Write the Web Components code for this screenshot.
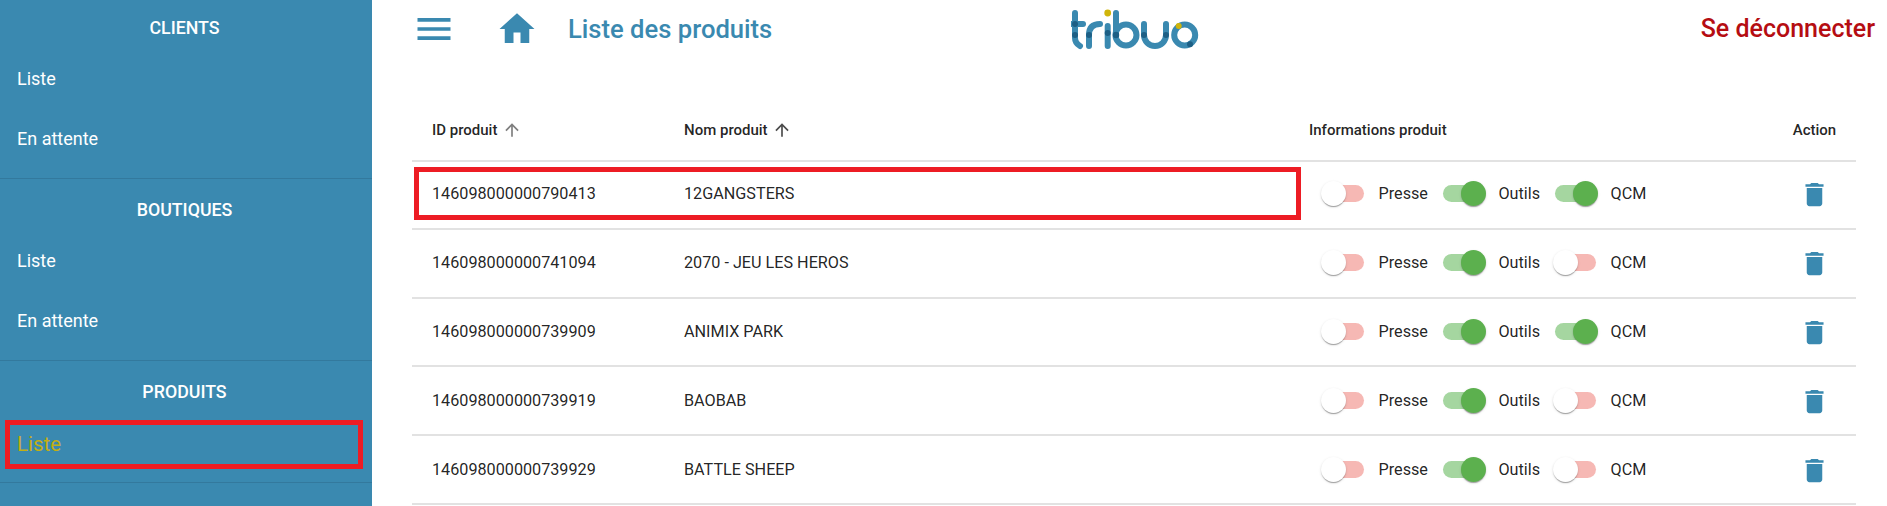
<!DOCTYPE html>
<html lang="fr">
<head>
<meta charset="utf-8">
<title>Liste des produits</title>
<style>
  html, body { margin: 0; height: 100%; overflow: hidden; background: #fff; }
  body { font-family: Roboto, "Liberation Sans", sans-serif; }
</style>
</head>
<body>
<app-shell>
  <app-sidebar slot="sidebar">
    <nav-section title="CLIENTS" first>
      <nav-item>Liste</nav-item>
      <nav-item>En attente</nav-item>
    </nav-section>
    <nav-section title="BOUTIQUES">
      <nav-item>Liste</nav-item>
      <nav-item>En attente</nav-item>
    </nav-section>
    <nav-section title="PRODUITS">
      <nav-item active>Liste</nav-item>
    </nav-section>
  </app-sidebar>
  <app-topbar title="Liste des produits"></app-topbar>
  <product-table>
    <product-row pid="146098000000790413" name="12GANGSTERS" presse="0" outils="1" qcm="1" marked></product-row>
    <product-row pid="146098000000741094" name="2070 - JEU LES HEROS" presse="0" outils="1" qcm="0"></product-row>
    <product-row pid="146098000000739909" name="ANIMIX PARK" presse="0" outils="1" qcm="1"></product-row>
    <product-row pid="146098000000739919" name="BAOBAB" presse="0" outils="1" qcm="0"></product-row>
    <product-row pid="146098000000739929" name="BATTLE SHEEP" presse="0" outils="1" qcm="0"></product-row>
  </product-table>
</app-shell>

<script>
const COLUMNS = '272px 625px 1fr 83px';

class AppShell extends HTMLElement {
  constructor() {
    super();
    this.attachShadow({ mode: 'open' });
    this.shadowRoot.innerHTML = `
      <style>
        :host { display: grid; grid-template-columns: 372px 1fr; height: 506px; overflow: hidden; }
        .main { min-width: 0; }
      </style>
      <slot name="sidebar"></slot>
      <div class="main"><slot></slot></div>
    `;
  }
}

class AppSidebar extends HTMLElement {
  constructor() {
    super();
    this.attachShadow({ mode: 'open' });
    this.shadowRoot.innerHTML = `
      <style>
        :host { display: block; background: #3a89b0; height: 506px; overflow: hidden; position: relative; }
      </style>
      <slot></slot>
    `;
  }
}

class NavSection extends HTMLElement {
  constructor() {
    super();
    this.attachShadow({ mode: 'open' });
    this.shadowRoot.innerHTML = `
      <style>
        :host { display: block; padding-bottom: 10px; border-bottom: 1px solid #33799d; }
        :host([first]) { margin-top: -3px; }
        h2 {
          margin: 0; height: 51px; padding: 19px 3px 0 0; box-sizing: border-box;
          font: 500 17.8px/24px Roboto, sans-serif; color: #fff; text-align: center;
        }
      </style>
      <h2></h2>
      <slot></slot>
    `;
    this.shadowRoot.querySelector('h2').textContent = this.getAttribute('title');
    this.removeAttribute('title');
  }
}

class NavItem extends HTMLElement {
  constructor() {
    super();
    this.attachShadow({ mode: 'open' });
    this.shadowRoot.innerHTML = `
      <style>
        :host {
          display: flex; align-items: center; height: 60px; padding-left: 17px;
          font: 400 18px Roboto, sans-serif; color: #fff; position: relative;
        }
        :host([active]) { height: 58px; margin-top: 2px; padding-top: 2px; box-sizing: border-box; font-size: 20.5px; color: #c3af12; }
        :host([active])::after {
          content: ''; position: absolute; left: 5px; top: 6px; width: 358px; height: 49px;
          box-sizing: border-box; border: 5px solid #ed1c24;
        }
      </style>
      <slot></slot>
    `;
  }
}

class AppTopbar extends HTMLElement {
  constructor() {
    super();
    this.attachShadow({ mode: 'open' });
    this.shadowRoot.innerHTML = `
      <style>
        :host { display: flex; align-items: center; height: 60px; color: #3a89b0; font-family: Roboto, sans-serif; }
        svg { display: block; fill: currentColor; flex: none; }
        .menu { margin: -3px 0 0 39.5px; }
        .home { margin: -3px 0 0 40px; }
        h1 { margin: -2px 0 0 30.5px; font-size: 25.6px; font-weight: 500; white-space: nowrap; }
        .logo { margin: -1px 0 0 299px; }
        .logout { margin: -3px 12px 0 auto; font-size: 25px; font-weight: 500; color: #b50d12; white-space: nowrap; }
      </style>
      <svg class="menu" width="44" height="44" viewBox="0 0 24 24"><path d="M3 18h18v-2H3v2zm0-5h18v-2H3v2zm0-7v2h18V6H3z"/></svg>
      <svg class="home" width="42" height="42" viewBox="0 0 24 24"><path d="M10 20v-6h4v6h5v-8h3L12 3 2 12h3v8z"/></svg>
      <h1></h1>
      <svg class="logo" width="128" height="60" viewBox="0 0 128 60" style="fill:none">
        <g fill="none" stroke="#3a89b0" stroke-width="6" stroke-linecap="round">
          <path d="M4 13V38Q4 43 9 46"/>
          <path d="M1 24H12"/>
          <path d="M18 46V35Q18 24 29 24"/>
          <path d="M36.7 26V46"/>
          <path d="M45 13V35"/>
          <circle cx="55" cy="35" r="10.5"/>
          <path d="M73 24V35A11 11 0 0 0 95 35V24"/>
          <circle cx="113.7" cy="35" r="10.5"/>
        </g>
        <g fill="#1d5f85">
          <circle cx="4" cy="24" r="3"/>
          <circle cx="4" cy="35" r="3"/>
          <circle cx="18" cy="35" r="3"/>
          <circle cx="36.7" cy="33" r="3"/>
          <circle cx="45" cy="35" r="3.2"/>
          <circle cx="73" cy="35" r="3"/>
          <circle cx="95" cy="35" r="3"/>
          <circle cx="119" cy="44.3" r="3"/>
        </g>
        <circle cx="36.7" cy="13" r="3.4" fill="#d0b50a"/>
        <circle cx="107.7" cy="26" r="3" fill="#d0b50a"/>
      </svg>
      <div class="logout">Se déconnecter</div>
    `;
    this.shadowRoot.querySelector('h1').textContent = this.getAttribute('title');
    this.removeAttribute('title');
  }
}

class ProductTable extends HTMLElement {
  constructor() {
    super();
    this.attachShadow({ mode: 'open' });
    this.shadowRoot.innerHTML = `
      <style>
        :host { display: block; margin: 40px 31px 0 40px; font-family: Roboto, sans-serif; }
        .head {
          display: grid; grid-template-columns: ${COLUMNS}; align-items: center;
          height: 60px; border-bottom: 2px solid #e2e2e2; margin-bottom: -1px;
          font-size: 15px; font-weight: 500; color: rgba(0,0,0,.87);
        }
        .head > div { display: flex; align-items: center; gap: 5px; padding-left: 20px; }
        .head > div.n { padding-left: 0; gap: 4px; }
        .head > div.a { padding: 0; justify-content: center; }
        svg { display: block; }
      </style>
      <div class="head">
        <div>ID produit <svg width="20" height="20" viewBox="0 0 24 24" opacity=".5"><path d="M4 12l1.41 1.41L11 7.83V20h2V7.83l5.58 5.59L20 12l-8-8-8 8z"/></svg></div>
        <div class="n">Nom produit <svg width="20" height="20" viewBox="0 0 24 24" opacity=".7"><path d="M4 12l1.41 1.41L11 7.83V20h2V7.83l5.58 5.59L20 12l-8-8-8 8z"/></svg></div>
        <div class="n">Informations produit</div>
        <div class="a">Action</div>
      </div>
      <slot></slot>
    `;
  }
}

class ProductRow extends HTMLElement {
  constructor() {
    super();
    this.attachShadow({ mode: 'open' });
    const on = (name) => this.getAttribute(name) === '1' ? 'checked' : '';
    this.shadowRoot.innerHTML = `
      <style>
        :host {
          display: grid; grid-template-columns: ${COLUMNS}; align-items: center;
          height: 68.8px; box-sizing: border-box; padding-bottom: 1px; border-bottom: 2px solid #e2e2e2;
          font: 400 16.2px Roboto, sans-serif; color: rgba(0,0,0,.87); position: relative;
        }
        :host([marked])::after {
          content: ''; position: absolute; left: 2px; top: 6px; width: 887px; height: 53px;
          box-sizing: border-box; border: 5px solid #ed1c24;
        }
        .id { padding-left: 20px; }
        .toggles { display: flex; align-items: center; gap: 15px; padding-left: 14px; }
        .del { display: flex; justify-content: center; margin-top: 2px; }
        svg { display: block; fill: #3a89b0; }
      </style>
      <div class="id">${this.getAttribute('pid')}</div>
      <div class="name">${this.getAttribute('name')}</div>
      <div class="toggles">
        <slide-toggle ${on('presse')}></slide-toggle><span>Presse</span>
        <slide-toggle ${on('outils')}></slide-toggle><span>Outils</span>
        <slide-toggle ${on('qcm')}></slide-toggle><span>QCM</span>
      </div>
      <div class="del"><svg width="31" height="31" viewBox="0 0 24 24"><path d="M6 19c0 1.1.9 2 2 2h8c1.1 0 2-.9 2-2V7H6v12zM19 4h-3.5l-1-1h-5l-1 1H5v2h14V4z"/></svg></div>
    `;
  }
}

class SlideToggle extends HTMLElement {
  constructor() {
    super();
    this.attachShadow({ mode: 'open' });
    this.shadowRoot.innerHTML = `
      <style>
        :host { display: block; position: relative; width: 40.5px; height: 17px; border-radius: 9px; background: #f6b8b4; flex: none; }
        :host([checked]) { background: #a5d6a0; }
        .thumb {
          position: absolute; left: -2px; top: -4px; width: 25px; height: 25px; border-radius: 50%;
          background: #fff;
          box-shadow: 0 2px 1px -1px rgba(0,0,0,.2), 0 1px 1px 0 rgba(0,0,0,.14), 0 1px 3px 0 rgba(0,0,0,.12);
        }
        :host([checked]) .thumb { left: 18px; background: #5cb04e; }
      </style>
      <div class="thumb"></div>
    `;
  }
}

customElements.define('app-shell', AppShell);
customElements.define('app-sidebar', AppSidebar);
customElements.define('nav-section', NavSection);
customElements.define('nav-item', NavItem);
customElements.define('app-topbar', AppTopbar);
customElements.define('product-table', ProductTable);
customElements.define('product-row', ProductRow);
customElements.define('slide-toggle', SlideToggle);
</script>
</body>
</html>
